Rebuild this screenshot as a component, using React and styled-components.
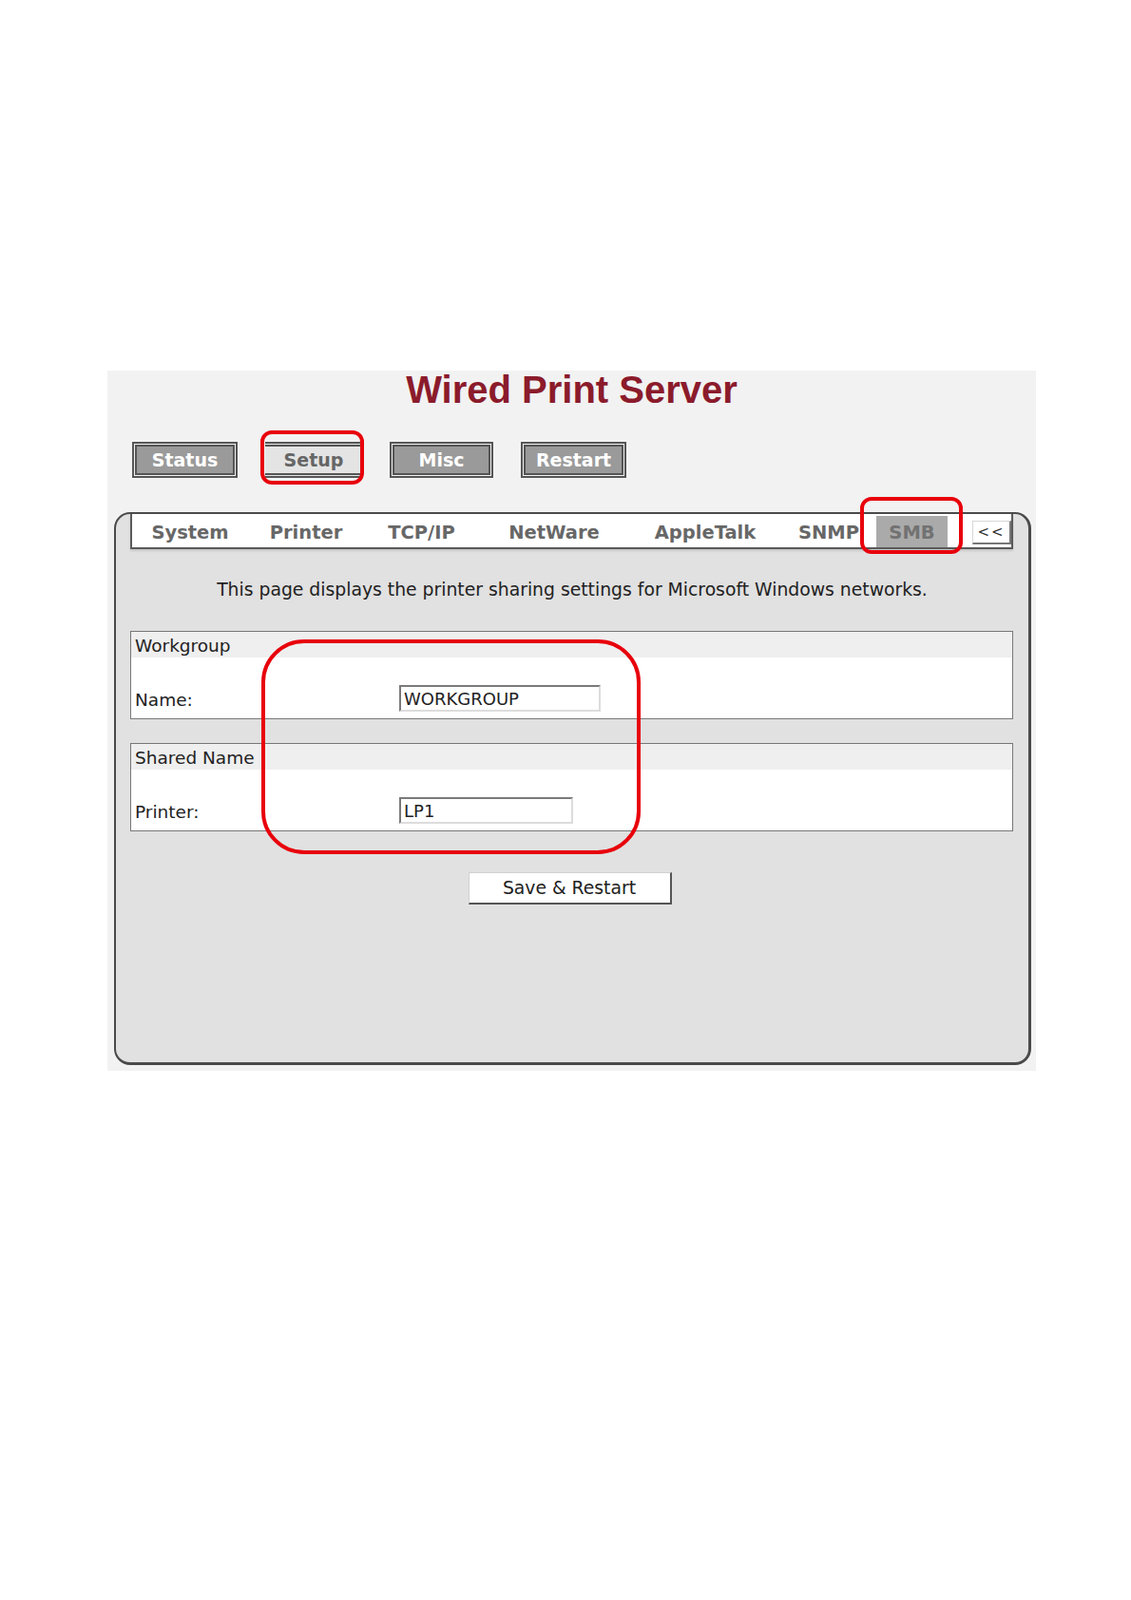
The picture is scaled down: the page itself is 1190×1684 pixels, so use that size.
import React from 'react';
import styled, { createGlobalStyle, css } from 'styled-components';

const GlobalStyle = createGlobalStyle`
  body {
    margin: 0;
    background: #ffffff;
    font-family: "DejaVu Sans", Verdana, sans-serif;
    color: #222;
  }
`;

const Page = styled.div`
  padding: 390px 0 0 113px;
  height: 1684px;
  box-sizing: border-box;
`;

const Panel = styled.div`
  position: relative;
  width: 977px;
  height: 737px;
  box-sizing: border-box;
  background: #f2f2f2;
`;

const Title = styled.h1`
  margin: 0;
  font-family: "Liberation Sans", Arial, sans-serif;
  font-size: 40px;
  line-height: 40px;
  font-weight: bold;
  color: #8b1b2b;
  text-align: center;
`;

const NavBar = styled.div`
  display: flex;
  gap: 29px;
  margin-top: 35px;
  padding-left: 26px;
`;

const NavButton = styled.div`
  width: ${({ $w }) => $w}px;
  height: 38px;
  box-sizing: border-box;
  border: 5px double #555;
  background: #9a9a9a;
  background-clip: padding-box;
  color: #fff;
  font-size: 19px;
  font-weight: bold;
  line-height: 28px;
  text-align: center;
  ${({ $active }) =>
    $active &&
    css`
      border-left: none;
      border-right: none;
      background: #e4e4e4;
      color: #666;
    `}
`;

const Frame = styled.div`
  width: 965px;
  height: 582px;
  box-sizing: border-box;
  margin: 36px 0 0 7px;
  border: solid #4a4a4a;
  border-width: 2px 3px 3px 2px;
  border-radius: 17px;
  background: #e1e1e1;
`;

const TabStrip = styled.div`
  display: flex;
  height: 37px;
  box-sizing: border-box;
  margin: 0 16px 0 15px;
  background: #fff;
  border: solid #5a5a5a;
  border-width: 0 2px 2px 2px;
  box-shadow: 0 2px 2px rgba(0, 0, 0, 0.12);
`;

const Tab = styled.div`
  width: ${({ $w }) => $w}px;
  display: flex;
  align-items: center;
  justify-content: center;
  padding-top: 3px;
  box-sizing: border-box;
  font-size: 19.5px;
  font-weight: bold;
  color: #676767;
  white-space: nowrap;
  ${({ $active }) =>
    $active &&
    css`
      margin-top: 2px;
      height: 33px;
      padding-top: 1px;
      background: #aaaaaa;
      color: #727272;
    `}
`;

const BackButton = styled.div`
  width: 41px;
  height: 25px;
  box-sizing: border-box;
  margin: 7px 0 0 26px;
  background: #fff;
  border: solid #d6d6d6;
  border-width: 1px 2px 2px 1px;
  border-right-color: #777;
  border-bottom-color: #777;
  font-size: 15px;
  line-height: 22px;
  letter-spacing: 2px;
  text-align: center;
  color: #333;
`;

const Intro = styled.p`
  margin: 32px 0 0;
  font-size: 18.8px;
  line-height: 22px;
  text-align: center;
  color: #222;
`;

const Group = styled.div`
  margin: ${({ $top }) => $top}px 16px 0 15px;
  border: 1px solid #777;
  background: #fff;
`;

const GroupHead = styled.div`
  height: 27px;
  padding: 2px 0 0 4px;
  box-sizing: border-box;
  background: #efefef;
  font-size: 18.5px;
  line-height: 25px;
`;

const GroupBody = styled.div`
  display: grid;
  grid-template-columns: 282px 1fr;
  align-items: center;
  padding: 29px 0 7px;
`;

const Label = styled.span`
  padding: 2px 0 0 4px;
  font-size: 18.5px;
`;

const TextInput = styled.input`
  width: ${({ $w }) => $w}px;
  height: 28px;
  box-sizing: border-box;
  padding: 1px 3px 0;
  border: 2px solid;
  border-color: #7a7a7a #dcdcdc #dcdcdc #7a7a7a;
  background: #fff;
  font-family: "DejaVu Sans", Verdana, sans-serif;
  font-size: 18px;
  color: #222;
  outline: none;
`;

const SaveRow = styled.div`
  display: flex;
  justify-content: center;
  margin-top: 43px;
`;

const SaveButton = styled.button`
  width: 214px;
  height: 34px;
  box-sizing: border-box;
  padding: 0;
  margin-left: -5px;
  background: #fff;
  border: solid #d0d0d0;
  border-width: 1px 2px 2px 1px;
  border-right-color: #555;
  border-bottom-color: #555;
  font-family: "DejaVu Sans", Verdana, sans-serif;
  font-size: 18.8px;
  color: #222;
`;

const Highlight = styled.div`
  position: absolute;
  left: ${({ $x }) => $x}px;
  top: ${({ $y }) => $y}px;
  width: ${({ $w }) => $w}px;
  height: ${({ $h }) => $h}px;
  box-sizing: border-box;
  border: 4px solid #e8000b;
  border-radius: ${({ $r }) => $r}px;
  pointer-events: none;
`;

const navItems = [
  { label: 'Status', w: 111 },
  { label: 'Setup', w: 102, active: true },
  { label: 'Misc', w: 109 },
  { label: 'Restart', w: 111 },
];

const tabs = [
  { label: 'System', w: 122 },
  { label: 'Printer', w: 122 },
  { label: 'TCP/IP', w: 121 },
  { label: 'NetWare', w: 158 },
  { label: 'AppleTalk', w: 160 },
  { label: 'SNMP', w: 100 },
  { label: 'SMB', w: 75, active: true },
];

export default function App() {
  return (
    <Page>
      <GlobalStyle />
      <Panel>
        <Title>Wired Print Server</Title>
        <NavBar>
          {navItems.map((item) => (
            <NavButton key={item.label} $w={item.w} $active={item.active}>
              {item.label}
            </NavButton>
          ))}
        </NavBar>
        <Frame>
          <TabStrip>
            {tabs.map((tab) => (
              <Tab key={tab.label} $w={tab.w} $active={tab.active}>
                {tab.label}
              </Tab>
            ))}
            <BackButton>&lt;&lt;</BackButton>
          </TabStrip>
          <Intro>This page displays the printer sharing settings for Microsoft Windows networks.</Intro>
          <Group $top={32}>
            <GroupHead>Workgroup</GroupHead>
            <GroupBody>
              <Label>Name:</Label>
              <TextInput $w={212} defaultValue="WORKGROUP" />
            </GroupBody>
          </Group>
          <Group $top={25}>
            <GroupHead>Shared Name</GroupHead>
            <GroupBody>
              <Label>Printer:</Label>
              <TextInput $w={183} defaultValue="LP1" />
            </GroupBody>
          </Group>
          <SaveRow>
            <SaveButton>Save &amp; Restart</SaveButton>
          </SaveRow>
        </Frame>
        <Highlight $x={161} $y={63} $w={109} $h={57} $r={12} />
        <Highlight $x={792} $y={133} $w={108} $h={60} $r={12} />
        <Highlight $x={162} $y={283} $w={399} $h={226} $r={45} />
      </Panel>
    </Page>
  );
}
